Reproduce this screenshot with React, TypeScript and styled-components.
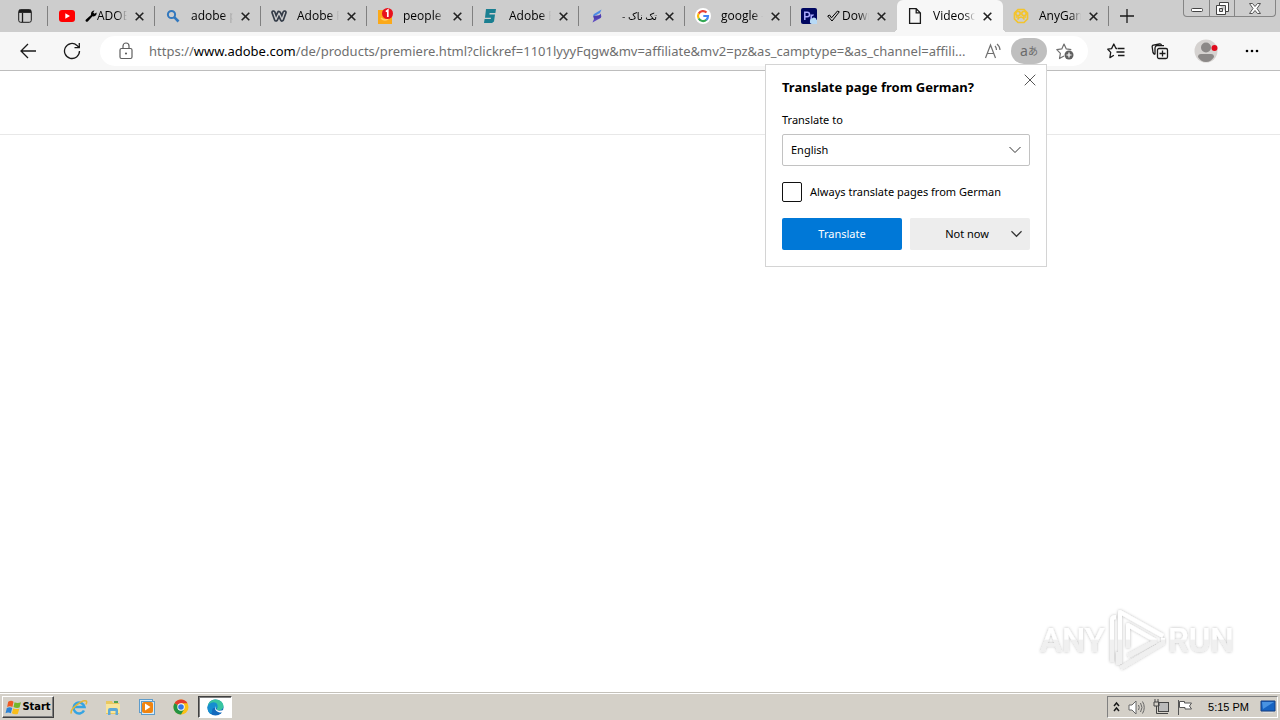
import React from "react";
import styled, { createGlobalStyle, css } from "styled-components";

const Global = createGlobalStyle`
  * { box-sizing: border-box; }
  body { margin: 0; background: #fff; }
  body, button, input, select { font-family: "Noto Sans", "DejaVu Sans", "Noto Sans CJK JP", sans-serif; font-size: 11px; line-height: 16px; color: #000; }
  button { border: 0; padding: 0; background: transparent; display: flex; align-items: center; justify-content: center; flex: none; }
  svg { display: block; flex: none; }
`;

const Screen = styled.div`
  min-height: 100vh;
  display: flex;
  flex-direction: column;
`;

/* Tab strip */
const TabStrip = styled.header`
  display: flex;
  height: 32px;
  background: #cdcdcd;
`;
const TabActions = styled.button`
  position: relative;
  width: 49px;
  height: 32px;
  &::after {
    content: "";
    position: absolute;
    right: 1px;
    top: 6px;
    width: 1px;
    height: 20px;
    background: #808080;
  }
`;
const TabList = styled.nav`
  display: flex;
  flex: 0 1 1060px;
  min-width: 0;
`;
const TabItem = styled.div<{ $active?: boolean; $line?: boolean }>`
  position: relative;
  display: flex;
  align-items: center;
  flex: 1 1 0;
  min-width: 0;
  padding: 0 8px 0 10px;
  gap: 10px;
  &::after {
    content: "";
    position: absolute;
    right: 0;
    top: 6px;
    width: 1px;
    height: 20px;
    background: ${(p) => (p.$line ? "#808080" : "transparent")};
  }
  ${(p) =>
    p.$active &&
    css`
      background: #f7f7f7;
      border-radius: 6px 6px 0 0;
      &::before, &::after {
        content: "";
        position: absolute;
        top: auto;
        bottom: 0;
        width: 4px;
        height: 4px;
      }
      &::before {
        left: -4px;
        background: radial-gradient(circle at 0 0, transparent 4px, #f7f7f7 4px);
      }
      &::after {
        right: -4px;
        background: radial-gradient(circle at 100% 0, transparent 4px, #f7f7f7 4px);
      }
    `}
`;
const TabTitle = styled.a<{ $rtl?: boolean }>`
  display: flex;
  align-items: center;
  flex: 1;
  min-width: 0;
  overflow: hidden;
  white-space: nowrap;
  font-family: "Open Sans", "Noto Sans", "DejaVu Sans", sans-serif;
  font-size: ${(p) => (p.$rtl ? 10 : 12)}px;
  color: #000;
  text-decoration: none;
  direction: ${(p) => (p.$rtl ? "rtl" : "ltr")};
  mask-image: linear-gradient(to ${(p) => (p.$rtl ? "left" : "right")}, #000 75%, transparent);
`;
const CloseTab = styled.button`
  width: 16px;
  height: 16px;
  margin-left: -6px;
`;
const NewTab = styled.button`
  width: 36px;
  height: 32px;
`;
const WindowControls = styled.div`
  display: flex;
  margin: 0 4px 0 auto;
  height: 17px;
  border: 1px solid #858585;
  border-top: 0;
  border-radius: 0 0 4px 4px;
`;
const WindowButton = styled.button<{ $wide?: boolean }>`
  width: ${(p) => (p.$wide ? 41 : 25)}px;
  & + & { border-left: 1px solid #858585; }
`;

/* Toolbar */
const Toolbar = styled.div`
  position: relative;
  display: flex;
  align-items: center;
  height: 39px;
  padding: 0 6px;
  background: #f7f7f7;
  border-bottom: 1px solid #bdbdbd;
`;
const ToolButton = styled.button<{ $wide?: boolean }>`
  width: ${(p) => (p.$wide ? 48 : 44)}px;
  height: 32px;
`;
const AddressBar = styled.div`
  display: flex;
  align-items: center;
  flex: 1;
  min-width: 0;
  height: 30px;
  margin: 0 6px;
  padding: 0 5px 0 16px;
  border-radius: 15px;
  background: #fff;
`;
const Url = styled.a`
  flex: 1;
  min-width: 0;
  margin-left: 13px;
  overflow: hidden;
  white-space: nowrap;
  text-overflow: ellipsis;
  font-size: 13px;
  line-height: 20px;
  color: #6f6f6f;
  text-decoration: none;
  b { font-weight: 400; color: #000; }
`;
const AddressButton = styled.button<{ $filled?: boolean }>`
  width: 36px;
  height: 26px;
  border-radius: 13px;
  color: #6a6a6a;
  background: ${(p) => (p.$filled ? "#bfbfbf" : "transparent")};
`;
const Latin = styled.span`
  font-size: 14px;
`;
const Kana = styled.span`
  font-size: 10px;
`;

/* Translate prompt */
const Prompt = styled.form`
  position: absolute;
  top: 32px;
  right: 233px;
  width: 282px;
  padding: 12px 16px 16px;
  background: #fff;
  border: 1px solid #d4d4d4;
  z-index: 2;
`;
const PromptTitle = styled.h1`
  margin: 0 0 15px;
  font-size: 13px;
  line-height: 20px;
  font-weight: 700;
`;
const PromptClose = styled.button`
  position: absolute;
  top: 7px;
  right: 8px;
  width: 16px;
  height: 16px;
`;
const FieldLabel = styled.label`
  display: block;
  margin-bottom: 6px;
`;
const SelectBox = styled.div`
  position: relative;
  svg { position: absolute; right: 9px; top: 12px; pointer-events: none; }
`;
const Select = styled.select`
  appearance: none;
  width: 100%;
  height: 32px;
  padding: 0 8px;
  border: 1px solid #c2c2c2;
  border-radius: 2px;
  background: #fff;
`;
const CheckLabel = styled.label`
  display: flex;
  align-items: center;
  gap: 8px;
  margin: 16px 0;
  white-space: nowrap;
`;
const Checkbox = styled.input`
  appearance: none;
  flex: none;
  width: 20px;
  height: 20px;
  margin: 0;
  border: 1px solid #111;
  border-radius: 2px;
  background: #fff;
`;
const PromptActions = styled.div`
  display: flex;
  gap: 8px;
`;
const PromptButton = styled.button<{ $primary?: boolean }>`
  flex: 1;
  height: 32px;
  border-radius: 2px;
  background: ${(p) => (p.$primary ? "#0078d7" : "#ededed")};
  color: ${(p) => (p.$primary ? "#fff" : "#000")};
`;
const SplitButton = styled.div`
  display: flex;
  flex: 1;
  background: #ededed;
  border-radius: 2px;
`;
const NotNow = styled(PromptButton)`
  padding-left: 22px;
`;
const MoreChoices = styled.button`
  width: 28px;
`;

/* Page */
const Page = styled.main`
  position: relative;
  flex: 1;
`;
const PageHeader = styled.div`
  height: 64px;
  border-bottom: 1px solid #e8e8e8;
`;
const Watermark = styled.div`
  position: absolute;
  right: 40px;
  bottom: 20px;
`;

/* Taskbar */
const Taskbar = styled.footer`
  display: flex;
  align-items: center;
  height: 28px;
  padding: 1px 2px 0;
  background: #d4d0c8;
  border-top: 1px solid #c4c1ba;
  box-shadow: inset 0 1px #fff;
`;
const StartButton = styled.button`
  width: 52px;
  height: 22px;
  margin-right: 8px;
  font-family: "DejaVu Sans Condensed", "DejaVu Sans", sans-serif;
  font-weight: 700;
  font-size: 11px;
  border: 1px solid;
  border-color: #fff #404040 #404040 #fff;
  box-shadow: inset -1px -1px #808080;
`;
const TaskButton = styled.button<{ $active?: boolean }>`
  width: 34px;
  height: 22px;
  ${(p) =>
    p.$active &&
    css`
      background: #fff;
      border: 1px solid;
      border-color: #404040 #fff #fff #404040;
      box-shadow: inset 1px 1px #808080;
    `}
`;
const Tray = styled.div`
  display: flex;
  align-items: center;
  gap: 8px;
  height: 22px;
  margin-left: auto;
  padding: 0 1px 0 5px;
  border: 1px solid;
  border-color: #808080 #fff #fff #808080;
`;
const Clock = styled.time`
  margin: 0 3px 0 7px;
  font-family: "Liberation Sans", sans-serif;
  font-size: 11px;
  white-space: nowrap;
`;

const Line = ({ w = 16, h = w, box, color = "#1a1a1a", sw = 1, children }: {
  w?: number; h?: number; box?: string; color?: string; sw?: number; children: React.ReactNode;
}) => (
  <svg width={w} height={h} viewBox={box ?? `0 0 ${w} ${h}`} fill="none" stroke={color} strokeWidth={sw} aria-hidden="true">
    {children}
  </svg>
);

const Cross = ({ size = 9, color = "#222", sw = 1.6 }) => (
  <Line w={size} color={color} sw={sw}>
    <path d={`M.7.7L${size - 0.7} ${size - 0.7}M${size - 0.7}.7L.7 ${size - 0.7}`} />
  </Line>
);
const Chevron = ({ color = "#333", sw = 1.3, w = 12 }) => (
  <Line w={w} h={8} box="0 0 12 8" color={color} sw={sw}><path d="M.5 1L6 6.5 11.5 1" /></Line>
);

const YouTubeIcon = () => (
  <svg width="16" height="16"><rect y="2" width="16" height="12" rx="3" fill="#f00" /><path d="M6.3 5.3v5.4L11 8z" fill="#fff" /></svg>
);
const SearchIcon = () => (
  <Line color="#3278be" sw={2}><circle cx="6.5" cy="6.5" r="3.6" /><path d="M9.2 9.2l4.3 4.3" strokeWidth="2.6" /></Line>
);
const WIcon = () => (
  <Line color="#343c48" sw={4.6}>
    <path d="M2.5 4.5L5 11.5 8 5l3 6.5 2.5-7" strokeLinejoin="round" strokeLinecap="round" />
    <path d="M2.5 4.5L5 11.5 8 5l3 6.5 2.5-7" stroke="#cdcdcd" strokeWidth="1.3" strokeLinejoin="round" strokeLinecap="round" />
  </Line>
);
const NoticeIcon = () => (
  <svg width="16" height="16">
    <path d="M1 2h6v5h8v9H1z" fill="#fba919" /><path d="M4 10q4 4 8 0" stroke="#ffcf66" fill="none" strokeWidth="1.5" />
    <circle cx="10.5" cy="5.5" r="5.5" fill="#e8111c" />
    <path d="M8.8 3.6l2-1.4V9" fill="none" stroke="#fff" strokeWidth="1.7" />
  </svg>
);
const TealIcon = () => (
  <svg width="16" height="16"><path d="M3 1h10l-.6 4H6.600L6.400 6.500H12L11 13.500l-2 1.500H1l.6-4h6.200l.2-1.300H2z" fill="#1a7f91" /></svg>
);
const BoltIcon = () => (
  <svg width="16" height="16">
    <path d="M12.500 1.500L5 6q-1.500 1-.5 2.500L11 5z" fill="#4c8be6" />
    <path d="M4.500 8.500L8 9.500l4-4v3L5.500 11z" fill="#5b44b8" />
    <path d="M3.500 14.500L11.500 10q1.500-1.200.5-3L5 11z" fill="#5b48c0" />
    <path d="M4.300 8l7.700-1-.5 3-6.500 1z" fill="#4d3fae" />
  </svg>
);
const GoogleIcon = () => (
  <svg width="16" height="16" fill="none" strokeWidth="2.2">
    <circle cx="8" cy="8" r="8" fill="#fff" />
    <path d="M11.5 4.5A5 5 0 0 0 3.7 5.6" stroke="#ea4335" />
    <path d="M3.7 5.5a5 5 0 0 0 0 5" stroke="#fbbc05" />
    <path d="M3.7 10.5a5 5 0 0 0 7.7 1.3" stroke="#34a853" />
    <path d="M11.3 11.8A5 5 0 0 0 13 8H8.3" stroke="#4285f4" />
  </svg>
);
const PremiereIcon = () => (
  <svg width="16" height="16">
    <rect width="16" height="16" rx="2" fill="#000760" />
    <path d="M3.8 12V4.2h2.4q2.3 0 2.3 2.2T6.2 8.7H4M10.2 12V6.5m0 1.8q.8-1.5 2.4-1.3" fill="none" stroke="#aaaaff" strokeWidth="1.5" />
    <path d="M9 13.5a2.5 2.5 0 0 1 2-3 2.600 2.600 0 0 1 4.600 1.500A2 2 0 0 1 15 16h-4a2 2 0 0 1-2-2.500z" fill="#b7d9f5" />
  </svg>
);
const PageIcon = () => (
  <Line sw={1.3}><path d="M2.600.7h6.600l4.200 4.200v10.400H2.600zM9.200.7v4.200h4.200" /></Line>
);
const GameIcon = () => (
  <Line color="#f3c42d" sw={1.7}>
    <path d="M5 1.500h6L14.500 5v6L11 14.500H5L1.500 11V5z" />
    <circle cx="5" cy="5.500" r="2.200" /><circle cx="11" cy="5.500" r="2.200" />
    <path d="M4.500 11.500q3.500-5 7 0M3 9h3M10 9h3" />
  </Line>
);
const Wrench = () => (
  <svg width="12" height="12" viewBox="0 0 12 12" aria-hidden="true">
    <path d="M1 11.500Q0 10.500 1 9.500L6 5Q5.500 2 8 .8l1.500-.3-1.300 2 1.300 1.300 2-1.300Q12 5 10 6q-1.200.7-2.500.3L3 11.200q-1 1-2 .3z" />
  </svg>
);
const CheckMark = () => (
  <svg width="15" height="12" viewBox="0 0 15 12" fill="none" stroke="#000" aria-hidden="true">
    <path d="M.7 6l1.800-1 2 2.800L10.500 1l1.800.8L5 11z" />
  </svg>
);

const tabs = [
  { icon: <YouTubeIcon />, mark: <Wrench />, title: "ADOBE" },
  { icon: <SearchIcon />, title: "adobe premiere" },
  { icon: <WIcon />, title: "Adobe Premiere" },
  { icon: <NoticeIcon />, title: "people also" },
  { icon: <TealIcon />, title: "Adobe Premiere" },
  { icon: <BoltIcon />, title: "تک ناک -", rtl: true },
  { icon: <GoogleIcon />, title: "google - search" },
  { icon: <PremiereIcon />, mark: <CheckMark />, title: "Download" },
  { icon: <PageIcon />, title: "Videoschnitt", active: true },
  { icon: <GameIcon />, title: "AnyGame" },
];

const StartFlag = () => (
  <svg width="17" height="17" viewBox="0 0 16 16">
    <path d="M3 2.500Q6 1 8 2.500L7 7.500Q4.500 6 2 7.500z" fill="#ee5a24" /><path d="M9 3Q11.500 4.500 15 3l-1.300 5Q11 9 8 7.500z" fill="#74b72b" />
    <path d="M1.700 8.500Q4.500 7 6.800 8.500L5.500 13.500Q3 12 .5 13.500z" fill="#2b83d6" /><path d="M7.800 8.700q2.500 1.400 5.700.4L12 14q-3 1-5.500-.5z" fill="#f9bd19" />
  </svg>
);
const ExplorerE = () => (
  <svg width="18" height="18" fill="none">
    <path d="M14 12.500A5.500 5.500 0 1 1 14.500 9H5" stroke="#35a4e2" strokeWidth="2.500" />
    <path d="M1.500 15.500C-1 12 12 1 16.300 3q1 .8-.4 3.500" stroke="#e5b635" strokeWidth="1.500" />
  </svg>
);
const FolderIcon = () => (
  <svg width="18" height="18">
    <path d="M2 3h6l1 2h6v11H2z" fill="#e9c85f" /><path d="M2 6h14v9H2z" fill="#f8e59b" />
    <path d="M4 17v-5q0-2 2-2h6q2 0 2 2v5h-2.500v-4h-5v4z" fill="#5da8d6" /><path d="M10 3h4v2h-4z" fill="#52a350" />
  </svg>
);
const PlayerIcon = () => (
  <svg width="18" height="18">
    <rect x="1.500" y="1.500" width="13" height="13" fill="#d8ecfa" stroke="#5e9ccb" /><rect x="3.500" y="3.500" width="13" height="13" fill="#d8ecfa" stroke="#5e9ccb" /><rect x="4" y="4" width="11" height="11" rx="2" fill="#f08410" />
    <path d="M7 5.500v7L12.500 9z" fill="#fff" />
  </svg>
);
const ChromeIcon = () => (
  <svg width="16" height="16">
    <circle cx="8" cy="8" r="7.500" fill="#fbc116" />
    <path d="M8 8L1.500 4.250A7.500 7.500 0 0 1 14.500 4.250H8z" fill="#e33b2e" />
    <path d="M8 8L1.500 4.250A7.500 7.500 0 0 0 8 15.500l3.200-5.600z" fill="#229342" />
    <circle cx="8" cy="8" r="3.700" fill="#fff" /><circle cx="8" cy="8" r="2.800" fill="#3577e5" />
  </svg>
);
const EdgeIcon = () => (
  <svg width="17" height="17" viewBox="0 0 18 18">
    <circle cx="9" cy="9" r="8.500" fill="#1269bd" />
    <path d="M.6 8C1.500 3 5 .5 9 .5c5 0 8.500 3.500 8.500 7 0 3-2.500 4.500-5 4.500-2 0-2.800-1-2-2 .8-1.500-.5-4-3.500-4C4 6 1.800 6.500.6 8z" fill="#38c5a1" />
    <path d="M.5 9C1 6 3 3.800 7 3.500c3.500 0 5 3 4 6H8C6 9 5 11 5.500 13.500L4 16C1.500 14.500.5 12 .5 9z" fill="#168ed0" />
    <path d="M9.500 7.500c-1.500 2 .5 5 4 5 2 0 3-.5 5-1.500v2l-1.500 1c-1.500.5-3 .5-4.500 0-4-1-5-4.500-3-6.500z" fill="#fff" />
  </svg>
);

const AnyRun = () => (
  <svg width="202" height="66" viewBox="0 0 202 66" fill="none">
    <defs>
      <linearGradient id="run" x1="0" y1="0" x2="0" y2="66" gradientUnits="userSpaceOnUse">
        <stop offset=".5" stopColor="#fff" /><stop offset=".52" stopColor="#f0f0f0" />
      </linearGradient>
      <filter id="soft" x="-10%" y="-10%" width="120%" height="120%">
        <feDropShadow dx="0" dy="0" stdDeviation="1.500" floodColor="#000" floodOpacity=".28" />
      </filter>
    </defs>
    <g filter="url(#soft)">
      <g fill="url(#run)" fontFamily="Roboto, sans-serif" fontSize="33" fontWeight="500">
        <text x="2" y="46">ANY</text>
        <text x="130" y="46">RUN</text>
      </g>
      <path d="M82 41V6l43 24M74 56V14q0-3 4-3M80 59V46M90 42V19l28 16M125 32v5L83 62M118 35L90 50" stroke="url(#run)" strokeWidth="4" strokeLinejoin="round" />
      <path d="M82 40v18" stroke="url(#run)" strokeWidth="4" />
    </g>
  </svg>
);

export default function App() {
  return (
    <Screen>
      <Global />
      <TabStrip>
        <TabActions aria-label="Tab actions">
          <Line w={14}><rect x=".7" y=".7" width="12.600" height="12.600" rx="2" /><path d="M4.500 4v9" strokeWidth="1.300" /><path d="M1 2.300h12" strokeWidth="3.200" /></Line>
        </TabActions>
        <TabList aria-label="Tabs">
          {tabs.map((t, i) => (
            <TabItem key={i} $active={t.active} $line={i !== 7 && i !== 8}>
              {t.icon}
              <TabTitle href="#" $rtl={t.rtl}>{t.mark}{t.title}</TabTitle>
              <CloseTab aria-label="Close tab"><Cross /></CloseTab>
            </TabItem>
          ))}
        </TabList>
        <NewTab aria-label="New tab"><Line w={14}><path d="M7 0v14M0 7h14" strokeWidth="1.300" /></Line></NewTab>
        <WindowControls>
          <WindowButton aria-label="Minimize"><Line w={12} color="#444"><rect x=".5" y="6.500" width="11" height="3" rx="1" fill="#fff" /></Line></WindowButton>
          <WindowButton aria-label="Restore"><Line w={13} color="#444"><path d="M3.500 3.500v-3h9v9h-3M.5 3.500h9v9h-9zM3.500 6.500h3v3h-3z" fill="#fff" fillRule="evenodd" /></Line></WindowButton>
          <WindowButton $wide aria-label="Close"><Line w={12} h={11} color="#555"><path d="M.5.5h3L6 3.500 8.500.5h3L8 5.500l3.500 5h-3L6 7.500l-2.500 3h-3l3.500-5z" fill="#fff" /></Line></WindowButton>
        </WindowControls>
      </TabStrip>

      <Toolbar>
        <ToolButton aria-label="Back"><Line w={16} sw={1.300}><path d="M16 8H1M8 1L1 8l7 7" /></Line></ToolButton>
        <ToolButton aria-label="Refresh"><Line w={18} sw={1.300}><path d="M16.500 9A7.500 7.500 0 1 1 14 3.400L16 5.500M16.300 1v4.700h-4.800" /></Line></ToolButton>
        <AddressBar>
          <Line w={20} color="#5f5f5f" sw={1.200}><rect x="4" y="7.500" width="12" height="10" rx="1.500" /><path d="M7 7.500V5a3 3 0 0 1 6 0v2.500" /><circle cx="10" cy="12.500" r=".5" fill="#5f5f5f" /></Line>
          <Url href="#">https://<b>www.adobe.com</b>/de/products/premiere.html?clickref=1101lyyyFqgw&amp;mv=affiliate&amp;mv2=pz&amp;as_camptype=&amp;as_channel=affili...</Url>
          <AddressButton aria-label="Read aloud"><Line w={18} color="#707070" sw={1.200}><path d="M1.500 16L6.500 3l5 13M3.300 11.500h6.400M11 4q1.500 1.500 1.500 4M13 2q3 2.500 3 6" /></Line></AddressButton>
          <AddressButton $filled aria-label="Translate"><Latin>a</Latin><Kana>あ</Kana></AddressButton>
          <AddressButton aria-label="Add to favorites"><Line w={18} color="#707070" sw={1.200}><path d="M8 14l-4.500 2.500.9-5.200L.8 7.700l5-.8L8 2l2.300 4.900 5 .8" strokeLinejoin="round" /><circle cx="13" cy="13" r="4.500" fill="#606060" stroke="none" /><path d="M13 10.500v5M10.500 13h5" stroke="#fff" /></Line></AddressButton>
        </AddressBar>
        <ToolButton aria-label="Favorites"><Line w={18} sw={1.300}><path d="M10.500 6.500H9L6.800 2 4.600 6.600.8 7.200l2.900 3.200-.8 5.200 4-2.300M11 6.500h6.500M9.500 10h8M11 13.500h6.500" strokeLinejoin="round" /></Line></ToolButton>
        <ToolButton aria-label="Collections"><Line w={18} sw={1.300}><rect x="6.500" y="6.500" width="10" height="10" rx="1.500" /><path d="M11.500 8.500v6M8.500 11.500h6M4 12.500q-1.500-.5-2-2L1.200 5q-.3-1.500 1.200-1.800L8.500 2q1.500-.3 2 1.200M4 12.500V6q0-2 2-2.300h7" /></Line></ToolButton>
        <ToolButton $wide aria-label="Profile">
          <svg width="24" height="24"><circle cx="12" cy="12" r="11.500" fill="#d5d2d0" /><circle cx="12" cy="8.500" r="5" fill="#8b8887" /><path d="M4 18q0-3 3-3h10q3 0 3 3-3 5-8 5t-8-5z" fill="#8b8887" /><circle cx="20.500" cy="9" r="3" fill="#e00b1c" /></svg>
        </ToolButton>
        <ToolButton aria-label="Settings"><svg width="14" height="4"><circle cx="2" cy="2" r="1.300" /><circle cx="7" cy="2" r="1.300" /><circle cx="12" cy="2" r="1.300" /></svg></ToolButton>
        <Prompt>
          <PromptTitle>Translate page from German?</PromptTitle>
          <PromptClose type="button" aria-label="Close"><Cross size={12} color="#555" sw={1} /></PromptClose>
          <FieldLabel htmlFor="language">Translate to</FieldLabel>
          <SelectBox><Select id="language"><option>English</option></Select><Chevron sw={1} /></SelectBox>
          <CheckLabel><Checkbox type="checkbox" />Always translate pages from German</CheckLabel>
          <PromptActions>
            <PromptButton $primary type="button">Translate</PromptButton>
            <SplitButton>
              <NotNow type="button">Not now</NotNow>
              <MoreChoices type="button" aria-label="More choices"><Chevron w={11} /></MoreChoices>
            </SplitButton>
          </PromptActions>
        </Prompt>
      </Toolbar>

      <Page>
        <PageHeader />
        <Watermark><AnyRun /></Watermark>
      </Page>

      <Taskbar>
        <StartButton><StartFlag />Start</StartButton>
        <TaskButton aria-label="Internet Explorer"><ExplorerE /></TaskButton>
        <TaskButton aria-label="Files"><FolderIcon /></TaskButton>
        <TaskButton aria-label="Media Player"><PlayerIcon /></TaskButton>
        <TaskButton aria-label="Chrome"><ChromeIcon /></TaskButton>
        <TaskButton $active aria-label="Edge"><EdgeIcon /></TaskButton>
        <Tray>
          <Line w={7} h={12} sw={1.500}><path d="M1 5l2.500-3L6 5M1 10l2.500-3L6 10" /></Line>
          <Line w={17} color="#666"><path d="M1 6h3l4-4v13l-4-4H1z" fill="#fff" /><path d="M10.500 6q1.500 2.500 0 5M12.500 4q3 4.500 0 9M14.500 2.500q3.500 6 0 12" /></Line>
          <Line w={16} color="#444"><rect x="5.500" y="3.500" width="10" height="9" fill="#bbb" /><path d="M7 14.500h8M2 0v3M5 0v3M1 3h5v4H1zM3.500 7v7.500h5" /></Line>
          <Line w={16} color="#555"><path d="M1.500 1v15M2.500 2.500h5V4h7l-2 3 2 3H8V8.500H2.500z" fill="#fff" /></Line>
          <Clock>5:15 PM</Clock>
          <svg width="16" height="14"><path d="M1 1h14v10H1z" fill="#1663c2" stroke="#153f83" /><path d="M2 2h12L3 9z" fill="#4993e2" /><path d="M3 12h10v1H3z" fill="#ddd" /></svg>
        </Tray>
      </Taskbar>
    </Screen>
  );
}
